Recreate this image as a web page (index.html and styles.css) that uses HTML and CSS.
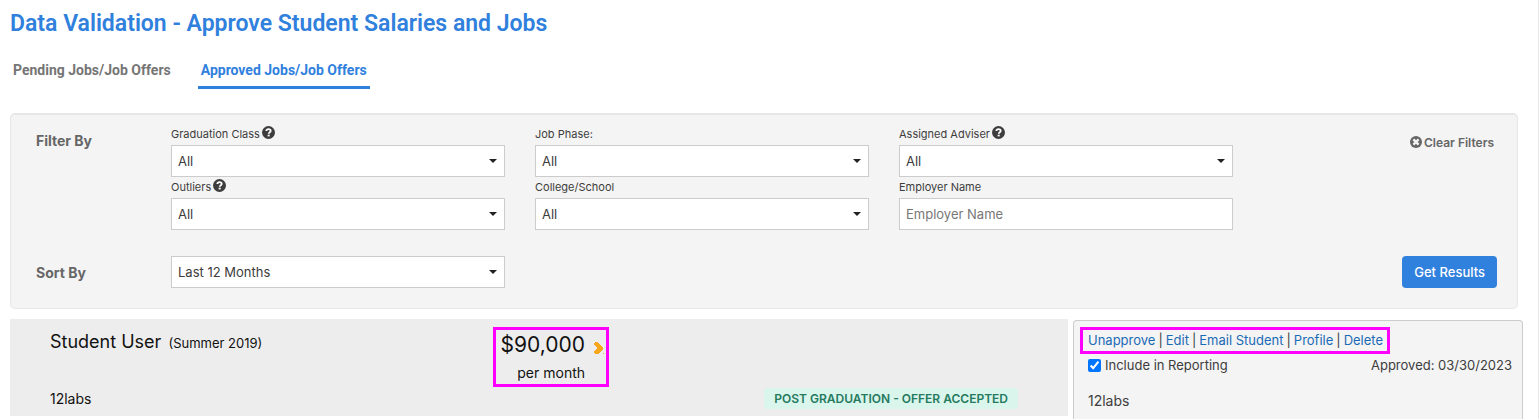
FILE: index.html
```html
<!DOCTYPE html>
<html lang="en">
<head>
    <meta charset="UTF-8">
    <meta name="viewport" content="width=device-width, initial-scale=1.0">
    <title>Data Validation</title>
    <link rel="stylesheet" href="styles.css">
</head>
<body>
    <svg width="0" height="0" class="symbols" aria-hidden="true">
        <symbol id="help" viewBox="0 0 12 12">
            <circle cx="6" cy="6" r="6" fill="currentColor"/>
            <path d="M4 4.6C4.100 3.400 5 2.900 6 2.900c1.200 0 2 .7 2 1.600C8 5.700 6.200 5.700 6.200 7.200" fill="none" stroke="#fff" stroke-width="1.700"/>
            <rect x="5.200" y="8" width="1.900" height="1.600" fill="#fff"/>
        </symbol>
    </svg>

    <main class="page">
        <h1>Data Validation - Approve Student Salaries and Jobs</h1>

        <nav class="tabs">
            <a href="#pending">Pending Jobs/Job Offers</a>
            <a href="#approved" class="active">Approved Jobs/Job Offers</a>
        </nav>

        <form class="filters">
            <h2>Filter By</h2>
            <div class="field">
                <label for="gradClass">Graduation Class <svg class="help"><use href="#help"/></svg></label>
                <select id="gradClass"><option>All</option></select>
            </div>
            <div class="field">
                <label for="jobPhase">Job Phase:</label>
                <select id="jobPhase"><option>All</option></select>
            </div>
            <div class="field">
                <label for="adviser">Assigned Adviser <svg class="help"><use href="#help"/></svg></label>
                <select id="adviser"><option>All</option></select>
            </div>
            <button type="reset" class="clear">
                <svg viewBox="0 0 12 12">
                    <circle cx="6" cy="6" r="6" fill="currentColor"/>
                    <path d="M4.200 4.200l3.600 3.600M7.800 4.200L4.200 7.800" stroke="#f4f4f4" stroke-width="2.400" stroke-linecap="square"/>
                </svg>
                Clear Filters
            </button>

            <div class="field second-row">
                <label for="outliers">Outliers <svg class="help"><use href="#help"/></svg></label>
                <select id="outliers"><option>All</option></select>
            </div>
            <div class="field">
                <label for="college">College/School</label>
                <select id="college"><option>All</option></select>
            </div>
            <div class="field">
                <label for="employer">Employer Name</label>
                <input type="text" id="employer" placeholder="Employer Name">
            </div>

            <h2 class="sort-label"><label for="sortBy">Sort By</label></h2>
            <div class="field sort">
                <select id="sortBy"><option>Last 12 Months</option></select>
            </div>
            <button type="submit" class="submit">Get Results</button>
        </form>

        <div class="results">
            <section class="student">
                <div class="name">Student User <small>(Summer 2019)</small></div>
                <div class="salary highlight">
                    <div>
                        <div class="amount">$90,000</div>
                        <div class="period">per month</div>
                    </div>
                    <svg class="chevron" viewBox="0 0 11 13">
                        <path d="M2 0h3v1h1v1h1v1h1v1h1v1h1v3H9v1H8v1H7v1H6v1H2v-1H1V9h1V8h1V7h1V5H3V4H2V3H1V1h1z" fill="#f5a81c"/>
                        <rect x="10" y="11" width="1" height="1" fill="#f5a81c"/>
                    </svg>
                </div>
                <div class="company">12labs</div>
                <span class="badge">POST GRADUATION - OFFER ACCEPTED</span>
            </section>

            <aside class="actions">
                <div class="links highlight">
                    <a href="#unapprove">Unapprove</a>
                    <span>|</span>
                    <a href="#edit">Edit</a>
                    <span>|</span>
                    <a href="#email">Email Student</a>
                    <span>|</span>
                    <a href="#profile">Profile</a>
                    <span>|</span>
                    <a href="#delete">Delete</a>
                </div>
                <div class="reporting">
                    <label for="include"><input type="checkbox" id="include" checked> Include in Reporting</label>
                    <span>Approved: 03/30/2023</span>
                </div>
                <div class="employer">12labs</div>
            </aside>
        </div>
    </main>
</body>
</html>
```

FILE: styles.css
```css
* {
    box-sizing: border-box;
}
body {
    margin: 0;
    background: #fff;
    color: #3d3d3d;
    font-family: Inter, Roboto, sans-serif;
    font-size: 13px;
}
.symbols {
    display: none;
}
.page {
    display: flex;
    flex-direction: column;
    min-height: 100vh;
    margin-right: 1px;
    padding: 9px 15px 0 10px;
    border-right: 1px solid #e8e8e8;
}
h1 {
    margin: 0;
    color: #3080dd;
    font-family: Roboto, sans-serif;
    font-size: 23px;
    font-weight: 600;
    line-height: 30px;
}

/* tabs */
.tabs {
    display: flex;
    gap: 24px;
    margin-top: 12px;
}
.tabs a {
    padding: 8px 3px 5px;
    border-bottom: 3px solid transparent;
    color: #757575;
    font-family: Roboto, sans-serif;
    font-size: 14px;
    font-weight: 700;
    line-height: 22px;
    text-decoration: none;
}
.tabs a.active {
    border-color: #3080dd;
    color: #3080dd;
}

/* filter panel */
.filters {
    display: grid;
    grid-template-columns: 105px repeat(3, 1fr) 234px;
    column-gap: 30px;
    margin: 24px 5px 0 0;
    padding: 9px 20px 20px 25px;
    background: #f4f4f4;
    border: 1px solid #e7e7e7;
    border-top-width: 2px;
    border-radius: 5px;
}
h2 {
    margin: 7px 0 0;
    color: #666;
    font-size: 14px;
    font-weight: 700;
    line-height: 20px;
}
.field label {
    display: flex;
    align-items: center;
    gap: 2px;
    height: 21px;
    padding-bottom: 2px;
    font-size: 11px;
}
.help {
    width: 13px;
    height: 13px;
    margin-bottom: 2px;
}
select, input[type="text"] {
    display: block;
    width: 100%;
    height: 32px;
    padding: 0 6px;
    border: 1px solid #ccc;
    border-radius: 0;
    background: #fff;
    color: #3d3d3d;
    font: inherit;
}
select {
    appearance: none;
    background: #fff url("data:image/svg+xml,%3Csvg xmlns='http://www.w3.org/2000/svg' width='8' height='4'%3E%3Cpath d='M0 0h8L4 4z' fill='%23222'/%3E%3C/svg%3E") no-repeat right 7px center;
}
input::placeholder {
    color: #777;
}
.clear {
    display: flex;
    align-items: center;
    justify-self: end;
    gap: 2px;
    height: 20px;
    margin: 8px 3px 0 0;
    padding: 0;
    border: none;
    background: none;
    color: #666;
    font: inherit;
    font-size: 12px;
    font-weight: 600;
    cursor: pointer;
}
.clear svg {
    width: 12px;
    height: 12px;
}
.second-row {
    grid-column: 2;
}
.sort-label {
    grid-column: 1;
    margin-top: 33px;
}
.sort {
    margin-top: 26px;
}
.submit {
    grid-column: 5;
    justify-self: end;
    height: 32px;
    margin-top: 26px;
    padding: 0 12px;
    border: none;
    border-radius: 4px;
    background: #3080dd;
    color: #fff;
    font: inherit;
    font-weight: 500;
    cursor: pointer;
}

/* results */
.results {
    display: flex;
    flex: 1;
    gap: 5px;
    margin-top: 10px;
}
.student {
    display: grid;
    grid-template-columns: 13fr auto 12fr;
    grid-template-rows: 60px 21px;
    row-gap: 1px;
    flex: 1;
    align-self: flex-start;
    padding: 8px 50px 7px 40px;
    background: #ededed;
    color: #111;
}
.highlight {
    border: 3px solid #f0f;
}
.name {
    font-size: 18px;
    line-height: 30px;
}
.name small {
    margin-left: 2px;
    font-size: 13px;
}
.salary {
    display: flex;
    width: 116px;
    gap: 8px;
    justify-content: flex-end;
    padding-right: 2px;
    text-align: right;
}
.amount {
    font-size: 21px;
    line-height: 29px;
}
.period {
    font-size: 14px;
    line-height: 28px;
}
.chevron {
    width: 11px;
    height: 13px;
    margin-top: 12px;
}
.company {
    grid-column: 1;
    font-size: 14px;
    line-height: 21px;
}
.badge {
    grid-column: 3;
    justify-self: end;
    padding: 0 10px;
    border-radius: 4px;
    background: #d9f5ec;
    color: #257a5e;
    font-size: 12px;
    font-weight: 600;
    line-height: 22px;
    white-space: nowrap;
}
.actions {
    flex: 0 0 450px;
    margin-top: 1px;
    padding: 6px 10px 0 6px;
    border: 1px solid #ccc;
    border-bottom: none;
    border-radius: 4px 4px 0 0;
    background: #f4f4f4;
}
.links {
    display: flex;
    gap: 3px;
    width: fit-content;
    padding: 0 4px 0 5px;
    line-height: 21px;
    white-space: nowrap;
}
.links a {
    color: #1b6ab5;
    text-decoration: none;
}
.reporting {
    display: flex;
    justify-content: space-between;
    padding-left: 8px;
    line-height: 22px;
}
.reporting label {
    display: flex;
    align-items: center;
    gap: 4px;
}
.reporting input {
    width: 13px;
    height: 13px;
    margin: 0;
    accent-color: #0075ff;
}
.employer {
    margin-top: 14px;
    padding-left: 8px;
    font-size: 14px;
    line-height: 22px;
}
```
